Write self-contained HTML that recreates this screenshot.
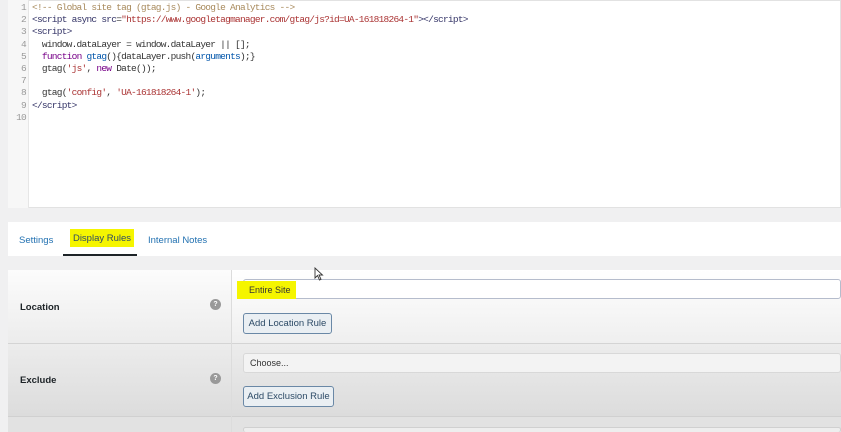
<!DOCTYPE html>
<html style="overflow:hidden"><head><style>
*{margin:0;padding:0;box-sizing:border-box}
html,body{width:841px;height:432px;overflow:hidden}
body{background:#f0f0f1;font-family:"Liberation Sans",sans-serif;position:relative}
.abs{position:absolute}
.code{left:8px;top:0;width:833px;height:208px;background:#fff;border:1px solid #e2e2e2}
.gut{left:8px;top:0;width:21px;height:208px;background:#f7f7f7;border-right:1px solid #e6e6e6}
.ln{font-family:"Liberation Mono",monospace;font-size:9.5px;letter-spacing:-0.75px;line-height:12.2px;color:#333;white-space:pre}
.num{left:8px;top:2px;width:18px;text-align:right;color:#999}
.src{left:32px;top:2px}
.c{color:#a88a5c}.tg{color:#336}.k{color:#708}.s{color:#a33}.a{color:#05a}
.tabs{left:8px;top:222px;width:833px;height:34px;background:#fff}
.tab{top:235px;font-size:9.5px;color:#2271b1}
.hl{background:#f5f500}
.row{left:8px;width:833px}
.lab{font-size:9.5px;font-weight:bold;color:#1d2327}
.help{width:11px;height:11px;border-radius:50%;background:#999;color:#fff;font-size:7px;text-align:center;line-height:11px;font-weight:bold}
.inp{height:20px;border:1px solid #b5bccc;border-radius:3px;background:#fff;font-size:9px;color:#333;padding-left:6px;line-height:18px;overflow:hidden}
.btn{height:21px;border:1px solid #6a88a6;border-radius:3px;background:#eaeff3;font-size:9.5px;color:#2c4a66;text-align:center;line-height:19px}
</style></head><body>
<div class="abs code"></div>
<div class="abs gut"></div>
<div class="abs ln num">1
2
3
4
5
6
7
8
9
10</div>
<div class="abs ln src"><span class="c">&lt;!-- Global site tag (gtag.js) - Google Analytics --&gt;</span>
<span class="tg">&lt;script</span> <span class="tg">async</span> <span class="tg">src</span>=<span class="s">"https://www.googletagmanager.com/gtag/js?id=UA-161818264-1"</span><span class="tg">&gt;&lt;/script&gt;</span>
<span class="tg">&lt;script&gt;</span>
  window.dataLayer = window.dataLayer || [];
  <span class="k">function</span> <span class="a">gtag</span>(){dataLayer.push(<span class="a">arguments</span>);}
  gtag(<span class="s">'js'</span>, <span class="k">new</span> Date());

  gtag(<span class="s">'config'</span>, <span class="s">'UA-161818264-1'</span>);
<span class="tg">&lt;/script&gt;</span>
</div>
<div class="abs tabs"></div>
<div class="abs tab" style="left:19px">Settings</div>
<div class="abs tab hl" style="left:70px;top:229px;width:64px;height:18px;line-height:20px;text-align:center;color:#2c4a66">Display Rules</div>
<div class="abs" style="left:63px;top:254px;width:74px;height:2px;background:#1d2327"></div>
<div class="abs tab" style="left:148px">Internal Notes</div>

<div class="abs row" style="top:270px;height:73px;background:linear-gradient(#fcfcfc,#ececec)"></div>
<div class="abs row" style="top:343px;height:73px;background:linear-gradient(#ececec,#dcdcdc);border-top:1px solid #d4d4d4"></div>
<div class="abs row" style="top:416px;height:16px;background:#e2e2e2;border-top:1px solid #d0d0d0"></div>
<div class="abs" style="left:231px;top:270px;width:1px;height:162px;background:#dcdcdc"></div>
<div class="abs" style="left:232px;top:270px;width:609px;height:73px;background:linear-gradient(#fff,#efefef)"></div>

<div class="abs lab" style="left:20px;top:302px">Location</div>
<div class="abs help" style="left:210px;top:299px">?</div>
<div class="abs inp" style="left:243px;top:279px;width:598px;padding-left:0"></div>
<div class="abs hl" style="left:237px;top:281px;width:59px;height:18px;font-size:9px;line-height:18px;color:#333;padding-left:12px">Entire Site</div>
<div class="abs btn" style="left:243px;top:313px;width:89px">Add Location Rule</div>

<div class="abs lab" style="left:20px;top:375px">Exclude</div>
<div class="abs help" style="left:210px;top:373px">?</div>
<div class="abs inp" style="left:243px;top:353px;width:598px;border-color:#d8d8d8;background:#f3f3f3">Choose...</div>
<div class="abs btn" style="left:243px;top:386px;width:91px">Add Exclusion Rule</div>
<div class="abs inp" style="left:243px;top:427px;width:598px;height:5px;border-bottom:none;border-color:#d0d0d0;background:#eee"></div>
<svg class="abs" style="left:314px;top:267px" width="10" height="14" viewBox="0 0 10 14"><path d="M1 1 L1 11 L3.5 8.5 L5.5 13 L7 12.3 L5 8 L8.5 8 Z" fill="#fff" stroke="#333" stroke-width="0.9"/></svg>
</body></html>
